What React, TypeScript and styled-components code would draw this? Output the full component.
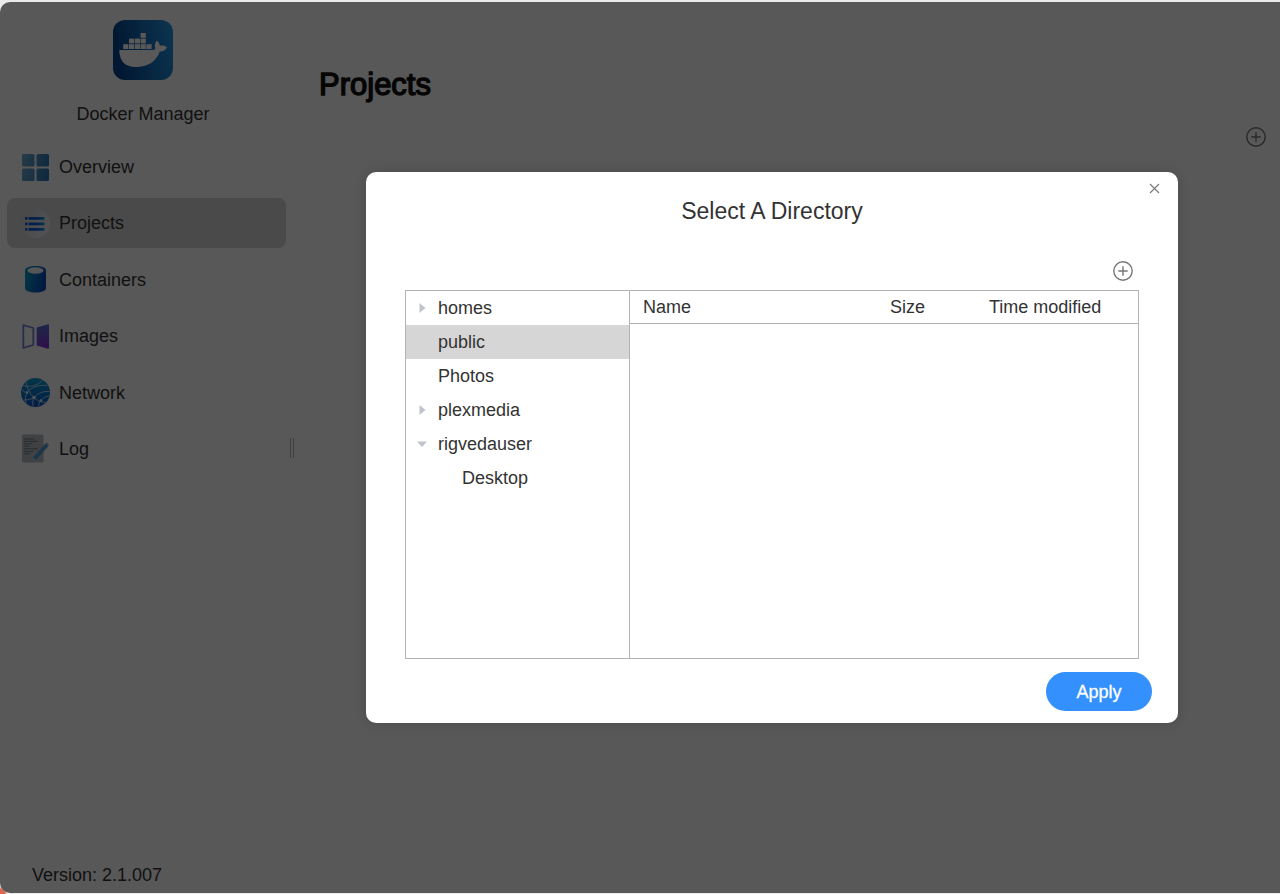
import React from "react";
import styled, { createGlobalStyle } from "styled-components";

const GlobalStyle = createGlobalStyle`
  *, *::before, *::after { box-sizing: border-box; }
  html, body, #root { height: 100%; }
  body {
    margin: 0;
    background: #e9eaea;
    color: #333;
    font: 18px/24px "Liberation Sans", Arial, sans-serif;
  }
  button, a { font: inherit; color: inherit; text-decoration: none; }
  button { border: 0; padding: 0; background: none; cursor: pointer; }
  svg { display: block; flex: none; }
`;

const Frame = styled.div`
  min-height: 100%;
  padding: 2px 0 1px;
  display: flex;
  background: radial-gradient(circle at bottom left, #dd6650 5px, transparent 7px);
`;

const Shell = styled.div`
  position: relative;
  flex: 1;
  display: flex;
  background: #fbfbfb;
  border-radius: 10px 0 0 10px;
  overflow: hidden;
`;

const Sidebar = styled.aside`
  width: 286px;
  display: flex;
  flex-direction: column;
  padding: 18px 0 6px 7px;
`;

const Brand = styled.div`
  display: flex;
  flex-direction: column;
  align-items: center;
  gap: 22px;
  padding-right: 7px;
`;

const Menu = styled.nav`
  display: flex;
  flex-direction: column;
  justify-content: space-between;
  height: 332px;
  margin-top: 16px;
`;

const MenuItem = styled.a<{ $active?: boolean }>`
  display: flex;
  align-items: center;
  gap: 9px;
  height: 50px;
  padding: 0 14px;
  border-radius: 8px;
  background: ${(p) => (p.$active ? "#d4d4d4" : "transparent")};
`;

const Version = styled.div`
  margin-top: auto;
  padding-left: 25px;
`;

const Splitter = styled.div`
  align-self: center;
  width: 4px;
  height: 20px;
  margin-left: 4px;
  border: solid #b4b4b4;
  border-width: 0 1px;
`;

const Main = styled.main`
  flex: 1;
  display: flex;
  flex-direction: column;
  padding: 63px 14px 0 25px;
`;

const PageTitle = styled.h1`
  margin: 0;
  font-size: 31px;
  line-height: 40px;
  font-weight: 400;
  color: #111;
  -webkit-text-stroke: 1.4px #111;
`;

const IconButton = styled.button`
  display: flex;
  align-self: flex-end;
  color: #777;
`;

const PageActions = styled.div`
  display: flex;
  justify-content: flex-end;
  margin-top: 22px;
`;

const Overlay = styled.div`
  position: absolute;
  inset: 0;
  display: flex;
  justify-content: center;
  align-items: flex-start;
  padding: 170px 102px 0 366px;
  background: rgba(0, 0, 0, 0.65);
`;

const Dialog = styled.section`
  flex: 1;
  max-width: 812px;
  display: flex;
  flex-direction: column;
  border-radius: 10px;
  padding: 9px 39px 12px;
  background: #fff;
  box-shadow: 0 0 12px rgba(0, 0, 0, 0.15);
`;

const CloseButton = styled(IconButton)`
  margin-right: -23px;
`;

const DialogTitle = styled.h2`
  margin: 0;
  font-size: 23px;
  line-height: 30px;
  font-weight: 400;
  text-align: center;
`;

const DialogActions = styled.div`
  display: flex;
  justify-content: flex-end;
  padding: 35px 6px 9px;
`;

const Browser = styled.div`
  display: flex;
  height: 369px;
  border: 1px solid #b3b3b3;
`;

const Tree = styled.ul`
  list-style: none;
  margin: 0;
  padding: 0;
  width: 224px;
  border-right: 1px solid #b3b3b3;
`;

const TreeRow = styled.li<{ $level?: number; $selected?: boolean }>`
  display: flex;
  align-items: center;
  gap: 8px;
  height: 34px;
  padding-left: ${(p) => 8 + (p.$level ?? 0) * 24}px;
  background: ${(p) => (p.$selected ? "#d6d6d6" : "transparent")};
`;

const Caret = styled.span`
  width: 16px;
  display: flex;
  justify-content: center;
`;

const Files = styled.div`
  flex: 1;
`;

const FileTable = styled.table`
  width: 100%;
  table-layout: fixed;
  border-collapse: collapse;
`;

const HeadCell = styled.th<{ $width?: string }>`
  width: ${(p) => p.$width ?? "auto"};
  height: 32px;
  padding: 0 0 0 13px;
  border-bottom: 1px solid #b3b3b3;
  font-weight: 400;
  text-align: left;
`;

const ApplyButton = styled.button`
  align-self: flex-end;
  width: 106px;
  height: 39px;
  margin: 13px -13px 0 0;
  border-radius: 20px;
  background: #3490fd;
  color: #fff;
  -webkit-text-stroke: 0.3px #fff;
`;

const DockerLogo = () => (
  <svg width="60" height="60" viewBox="0 0 60 60" aria-hidden="true">
    <defs>
      <linearGradient id="dock" x1="0" y1="0.2" x2="1" y2="0">
        <stop offset="0" stopColor="#06458f" />
        <stop offset="1" stopColor="#2497e6" />
      </linearGradient>
    </defs>
    <rect width="60" height="60" rx="12" fill="url(#dock)" />
    <g fill="#fff">
      <rect x="27.6" y="13" width="5.2" height="4.8" />
      <rect x="16" y="18.6" width="5.2" height="4.8" />
      <rect x="21.8" y="18.6" width="5.2" height="4.8" />
      <rect x="27.6" y="18.6" width="5.2" height="4.8" />
      <rect x="10.2" y="24.2" width="5.2" height="4.8" />
      <rect x="16" y="24.2" width="5.2" height="4.8" />
      <rect x="21.8" y="24.2" width="5.2" height="4.8" />
      <rect x="27.6" y="24.2" width="5.2" height="4.8" />
      <rect x="33.4" y="24.2" width="5.2" height="4.8" />
      <path d="M6.3 30H40c2-.2 2.500-1 2.200-2.300-.7-2.700-.2-5 1.500-7.300 2 1.500 3 3.200 3.100 5.400 2.600-.5 5-.2 7.200 1.400-1.300 3-3.700 4.300-7.200 4.300C43 42 34.500 47 23 47 11.500 47 6.300 40.500 6.300 30z" />
    </g>
  </svg>
);

const OverviewIcon = () => (
  <svg width="29" height="29" viewBox="0 0 29 29" aria-hidden="true">
    <defs>
      <linearGradient id="ov" gradientUnits="userSpaceOnUse" x1="0" y1="10" x2="29" y2="16">
        <stop offset="0" stopColor="#6ba9cf" />
        <stop offset="1" stopColor="#2a72b0" />
      </linearGradient>
    </defs>
    <g fill="url(#ov)">
      <rect x="1" y="1" width="12.500" height="12.500" rx="1.500" />
      <rect x="15.500" y="1" width="12.500" height="12.500" rx="1.500" />
      <rect x="1" y="15.500" width="12.500" height="12.500" rx="1.500" />
      <rect x="15.500" y="15.500" width="12.500" height="12.500" rx="1.500" />
    </g>
  </svg>
);

const ProjectsIcon = () => (
  <svg width="29" height="29" viewBox="0 0 29 29" aria-hidden="true">
    <defs>
      <linearGradient id="pc" x1="0" y1="0" x2="1" y2="0.500">
        <stop offset="0" stopColor="#c6cad2" />
        <stop offset="1" stopColor="#ececf0" />
      </linearGradient>
      <linearGradient id="pl" gradientUnits="userSpaceOnUse" x1="4" y1="0" x2="24" y2="0">
        <stop offset="0" stopColor="#0b4ccc" />
        <stop offset="0.600" stopColor="#0b5cd8" />
        <stop offset="1" stopColor="#109be0" />
      </linearGradient>
    </defs>
    <circle cx="14.500" cy="14.500" r="14.500" fill="url(#pc)" />
    <g fill="url(#pl)">
      <rect x="4" y="8" width="2.500" height="2.800" rx="1" />
      <rect x="4" y="13.500" width="2.500" height="2.800" rx="1" />
      <rect x="4" y="19" width="2.500" height="2.800" rx="1" />
      <rect x="7.500" y="8" width="16" height="2.800" rx="0.500" />
      <rect x="7.500" y="13.500" width="16" height="2.800" rx="0.500" />
      <rect x="7.500" y="19" width="16" height="2.800" rx="0.500" />
    </g>
  </svg>
);

const ContainersIcon = () => (
  <svg width="29" height="29" viewBox="0 0 29 29" aria-hidden="true">
    <defs>
      <linearGradient id="ct" x1="0" y1="0" x2="1" y2="0.300">
        <stop offset="0" stopColor="#08a3c8" />
        <stop offset="1" stopColor="#0648b8" />
      </linearGradient>
    </defs>
    <path d="M4 5.500C4 2.500 8.500 1 14.500 1S25 2.500 25 5.500v17.500c0 2.800-4.500 4.500-10.500 4.500S4 25.800 4 23z" fill="url(#ct)" />
    <ellipse cx="14.500" cy="5.500" rx="8" ry="3.200" fill="#f4f8fa" />
  </svg>
);

const ImagesIcon = () => (
  <svg width="29" height="29" viewBox="0 0 29 29" aria-hidden="true">
    <defs>
      <linearGradient id="im" x1="0" y1="0" x2="0.200" y2="1">
        <stop offset="0" stopColor="#5078d2" />
        <stop offset="1" stopColor="#8432d2" />
      </linearGradient>
    </defs>
    <path d="M2.300 3.200 12.300 6v17L2.300 25.800z" fill="none" stroke="#7a7fdc" strokeWidth="1.800" strokeLinejoin="round" />
    <path d="M27 2.200c.6-.1 1 .2 1 .8v23c0 .6-.4.900-1 .8l-10.500-3c-.5-.1-.8-.5-.8-1V6.200c0-.5.300-.9.800-1z" fill="url(#im)" />
  </svg>
);

const NetworkIcon = () => (
  <svg width="29" height="29" viewBox="0 0 29 29" aria-hidden="true">
    <defs>
      <linearGradient id="nw" x1="0" y1="0" x2="0" y2="1">
        <stop offset="0" stopColor="#0899d0" />
        <stop offset="1" stopColor="#0a55c4" />
      </linearGradient>
    </defs>
    <circle cx="14.500" cy="14.500" r="14.500" fill="url(#nw)" />
    <g fill="none" stroke="#d5e8f5" strokeWidth="0.800">
      <path d="M2 7.500C8 9.500 17 8 21.500 2" />
      <path d="M5 4c1 7 4 12 8 15.500 4.500 4 8 5 11.500 4.500" />
      <path d="M6 14.500C9 10 17 6.500 26 7.500" />
      <path d="M.5 11c1.500 2.500 3.500 3.500 5.500 3.500C4.500 18 4 21 5 25.500" />
      <path d="M13 19.500c4-4.500 9-6.500 15.500-6" />
      <path d="M3 22c4 0 7.500-1 10-2.500-1.500 3-1.500 6-1 9" />
      <path d="M20 22.500c2-2.500 4.500-4 8-4.500M20 22.500c-1.500 1.500-2.500 3.500-2.500 5.500" />
    </g>
    <g fill="#e5f2fa">
      <circle cx="6" cy="14.500" r="1.300" />
      <circle cx="13" cy="19.500" r="1.700" />
      <circle cx="20" cy="22.500" r="1.300" />
    </g>
  </svg>
);

const LogIcon = () => (
  <svg width="29" height="29" viewBox="0 0 29 29" aria-hidden="true">
    <rect x="1" y="0.500" width="21.500" height="28" rx="1.500" fill="#b4bbc0" />
    <path d="M3 5h10M3 7.300h14M3 9.700h8M3 12h6M3 14.800h14M3 17.300h9M3 19.700h6" stroke="#727b82" strokeWidth="1" />
    <path d="m12 23.500 12.500-14 3 2.500-12.500 14-3.500 1z" fill="#4c9aca" />
    <path d="m24 10 2-1.500 2 2L26.700 12z" fill="#78b8da" />
    <path d="m12 23.500 3 2.500-3.500 1z" fill="#b8d6e4" />
  </svg>
);

const PlusCircle = () => (
  <svg width="20" height="20" viewBox="0 0 20 20" fill="none" stroke="currentColor" strokeWidth="1.400" aria-hidden="true">
    <circle cx="10" cy="10" r="9.200" />
    <path d="M10 5.300v9.400M5.300 10h9.400" />
  </svg>
);

const CloseIcon = () => (
  <svg width="15" height="15" viewBox="0 0 15 15" fill="none" stroke="currentColor" strokeWidth="1.100" aria-hidden="true">
    <path d="m3 3 9 9M12 3l-9 9" />
  </svg>
);

const CaretIcon = ({ open }: { open?: boolean }) => (
  <svg width="10" height="10" viewBox="0 0 10 10" fill="#c0c4cc" aria-hidden="true">
    <path d={open ? "M0 2.500h10L5 8z" : "M2.500 0v10L8.500 5z"} />
  </svg>
);

const menu = [
  { label: "Overview", Icon: OverviewIcon },
  { label: "Projects", Icon: ProjectsIcon, active: true },
  { label: "Containers", Icon: ContainersIcon },
  { label: "Images", Icon: ImagesIcon },
  { label: "Network", Icon: NetworkIcon },
  { label: "Log", Icon: LogIcon },
];

const folders: { name: string; caret?: "open" | "closed"; selected?: boolean; level?: number }[] = [
  { name: "homes", caret: "closed" },
  { name: "public", selected: true },
  { name: "Photos" },
  { name: "plexmedia", caret: "closed" },
  { name: "rigvedauser", caret: "open" },
  { name: "Desktop", level: 1 },
];

export default function App() {
  return (
    <Frame>
      <GlobalStyle />
      <Shell>
        <Sidebar>
          <Brand>
            <DockerLogo />
            <span>Docker Manager</span>
          </Brand>
          <Menu>
            {menu.map(({ label, Icon, active }) => (
              <MenuItem key={label} href="#" $active={active}>
                <Icon />
                {label}
              </MenuItem>
            ))}
          </Menu>
          <Version>Version: 2.1.007</Version>
        </Sidebar>
        <Splitter />
        <Main>
          <PageTitle>Projects</PageTitle>
          <PageActions>
            <IconButton aria-label="Add project"><PlusCircle /></IconButton>
          </PageActions>
        </Main>
        <Overlay>
          <Dialog role="dialog" aria-labelledby="dialog-title">
            <CloseButton aria-label="Close"><CloseIcon /></CloseButton>
            <DialogTitle id="dialog-title">Select A Directory</DialogTitle>
            <DialogActions>
              <IconButton aria-label="New folder"><PlusCircle /></IconButton>
            </DialogActions>
            <Browser>
              <Tree>
                {folders.map((f) => (
                  <TreeRow key={f.name} $level={f.level} $selected={f.selected}>
                    <Caret>{f.caret && <CaretIcon open={f.caret === "open"} />}</Caret>
                    {f.name}
                  </TreeRow>
                ))}
              </Tree>
              <Files>
                <FileTable>
                  <thead>
                    <tr>
                      <HeadCell>Name</HeadCell>
                      <HeadCell $width="99px">Size</HeadCell>
                      <HeadCell $width="162px">Time modified</HeadCell>
                    </tr>
                  </thead>
                </FileTable>
              </Files>
            </Browser>
            <ApplyButton>Apply</ApplyButton>
          </Dialog>
        </Overlay>
      </Shell>
    </Frame>
  );
}
